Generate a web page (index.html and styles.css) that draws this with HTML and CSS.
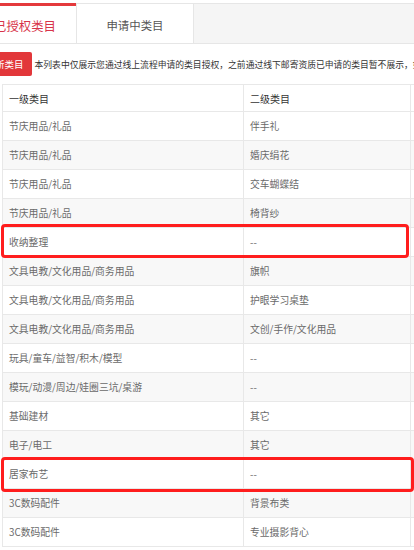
FILE: index.html
```html
<!DOCTYPE html>
<html lang="zh-CN">

<head>
    <meta charset="UTF-8">
    <title>类目管理</title>
    <link rel="stylesheet" href="styles.css">
</head>

<body>
    <div class="page">
        <div class="tabs">
            <div class="tab tab-active">已授权类目</div>
            <div class="tab">申请中类目</div>
        </div>

        <div class="notice">
            <span class="btn-add">添加新类目</span>
            <span class="notice-text">本列表中仅展示您通过线上流程申请的类目授权，之前通过线下邮寄资质已申请的类目暂不展示，如需查看请联系客服</span>
        </div>

        <table class="cat-table">
            <colgroup>
                <col class="c1">
                <col class="c2">
                <col class="c3">
            </colgroup>
            <thead>
                <tr>
                    <th>一级类目</th>
                    <th>二级类目</th>
                    <th>状态</th>
                </tr>
            </thead>
            <tbody>
                <tr><td>节庆用品/礼品</td><td>伴手礼</td><td>已授权</td></tr>
                <tr><td>节庆用品/礼品</td><td>婚庆绢花</td><td>已授权</td></tr>
                <tr><td>节庆用品/礼品</td><td>交车蝴蝶结</td><td>已授权</td></tr>
                <tr><td>节庆用品/礼品</td><td>椅背纱</td><td>已授权</td></tr>
                <tr><td>收纳整理</td><td>--</td><td>已授权</td></tr>
                <tr><td>文具电教/文化用品/商务用品</td><td>旗帜</td><td>已授权</td></tr>
                <tr><td>文具电教/文化用品/商务用品</td><td>护眼学习桌垫</td><td>已授权</td></tr>
                <tr><td>文具电教/文化用品/商务用品</td><td>文创/手作/文化用品</td><td>已授权</td></tr>
                <tr><td>玩具/童车/益智/积木/模型</td><td>--</td><td>已授权</td></tr>
                <tr><td>模玩/动漫/周边/娃圈三坑/桌游</td><td>--</td><td>已授权</td></tr>
                <tr><td>基础建材</td><td>其它</td><td>已授权</td></tr>
                <tr><td>电子/电工</td><td>其它</td><td>已授权</td></tr>
                <tr><td>居家布艺</td><td>--</td><td>已授权</td></tr>
                <tr><td>3C数码配件</td><td>背景布类</td><td>已授权</td></tr>
                <tr><td>3C数码配件</td><td>专业摄影背心</td><td>已授权</td></tr>
            </tbody>
        </table>

        <!-- annotation boxes -->
        <div class="mark mark-1"></div>
        <div class="mark mark-2"></div>
    </div>
</body>

</html>
```

FILE: styles.css
```css
body {
    margin: 0;
    overflow: hidden;
    font-family: "Noto Sans CJK SC", "Microsoft YaHei", sans-serif;
    color: #333;
    background: #fff;
}

.page {
    position: relative;
    width: 414px;
    padding-top: 3px;
}

.tabs {
    display: flex;
    height: 39px;
    border-top: 1px solid #e6e6e6;
    border-bottom: 1px solid #e6e6e6;
    background: #f5f5f5;
}

.tab {
    box-sizing: border-box;
    height: 40px;
    margin-top: -1px;
    padding: 0 30px;
    border-top: 1px solid #e6e6e6;
    background: #fff;
    font-size: 11.4px;
    line-height: 42px;
    color: #555;
    white-space: nowrap;
    overflow: hidden;
}

.tab + .tab {
    border-left: 1px solid #e6e6e6;
    border-right: 1px solid #e6e6e6;
    width: 118px;
    padding: 0;
    text-align: center;
}

.tab-active {
    margin-left: -6px;
    padding: 0 20px 0 0;
    border-top: 3px solid #e4393c;
    line-height: 40px;
    font-size: 12.4px;
    color: #d8344a;
}

.notice {
    display: flex;
    align-items: center;
    gap: 3px;
    margin-top: 8px;
    height: 24px;
    white-space: nowrap;
}

.btn-add {
    flex: none;
    height: 24px;
    margin-left: -32px;
    padding: 0 8px;
    background: #e2373a;
    border-radius: 2px;
    color: #fff;
    font-size: 9.5px;
    line-height: 24px;
}

.notice-text {
    font-size: 8.8px;
    color: #333;
}

.cat-table {
    margin-top: 8px;
    margin-left: 2px;
    width: 600px;
    table-layout: fixed;
    border-collapse: collapse;
}

.c1 {
    width: 241px;
}

.c2 {
    width: 167px;
}

.cat-table th,
.cat-table td {
    border: 1px solid #e8e8e8;
    padding: 0 6px;
    text-align: left;
    font-weight: normal;
    white-space: nowrap;
}

.cat-table th {
    height: 26px;
    font-size: 10px;
    color: #333;
}

.cat-table td {
    height: 28px;
    font-size: 9.8px;
    color: #6a6a6a;
}

.cat-table tbody tr:nth-child(even) {
    background: #f8f8f8;
}

.mark {
    position: absolute;
    left: 1px;
    border: 3px solid #ff1d1d;
    border-radius: 4px;
    box-sizing: border-box;
}

.mark-1 {
    top: 224px;
    width: 408px;
    height: 34px;
}

.mark-2 {
    top: 457px;
    width: 413px;
    height: 35px;
}
```
